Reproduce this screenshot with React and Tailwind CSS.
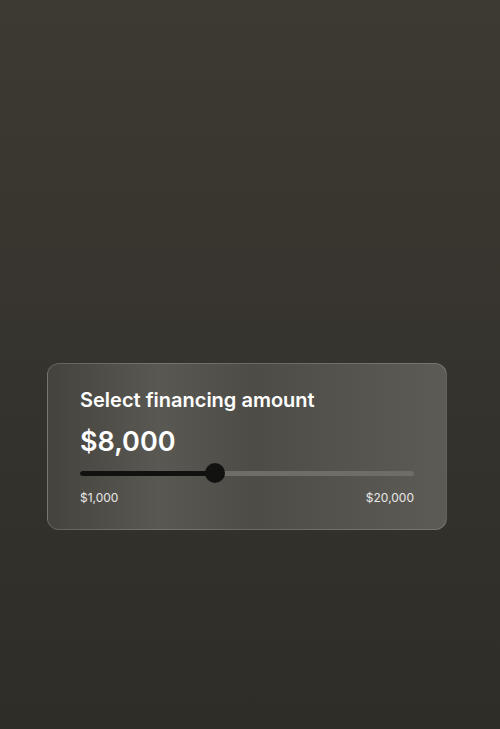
import React from 'react';

const AmountSlider = ({ percent }) => (
    <div className="relative h-5 flex items-center">
        <div className="h-[5px] w-full rounded-full bg-[#6f6d68]" />
        <div
            className="absolute left-0 h-[5px] rounded-full bg-[#111110]"
            style={{ width: `${percent}%` }}
        />
        <div
            className="absolute w-5 h-5 -ml-[10px] rounded-full bg-[#121211]"
            style={{ left: `${percent}%` }}
        />
    </div>
);

export default function App() {
    return (
        <div
            className="min-h-[729px] bg-gradient-to-b from-[#3d3a33] to-[#2f2d28] pt-[363px]"
            style={{ fontFamily: 'Inter, "Noto Sans", sans-serif' }}
        >
            <div className="ml-[47px] w-[400px] rounded-[12px] border border-white/[0.17] bg-[linear-gradient(90deg,#45433e_0%,#5a5853_28%,#4e4c47_52%,#575550_80%,#5d5b56_100%)] px-[32px] pt-[24px] pb-[24px]">
                <h2 className="text-[20px] leading-[24px] font-semibold text-white">
                    Select financing amount
                </h2>
                <div className="mt-[13px] text-[27px] leading-[34px] font-semibold text-white">
                    $8,000
                </div>
                <div className="mt-[4px]">
                    <AmountSlider percent={40.3} />
                </div>
                <div className="mt-[7px] flex justify-between text-[12px] leading-[15px] text-[#e8e8e6]">
                    <span>$1,000</span>
                    <span>$20,000</span>
                </div>
            </div>
        </div>
    );
}
